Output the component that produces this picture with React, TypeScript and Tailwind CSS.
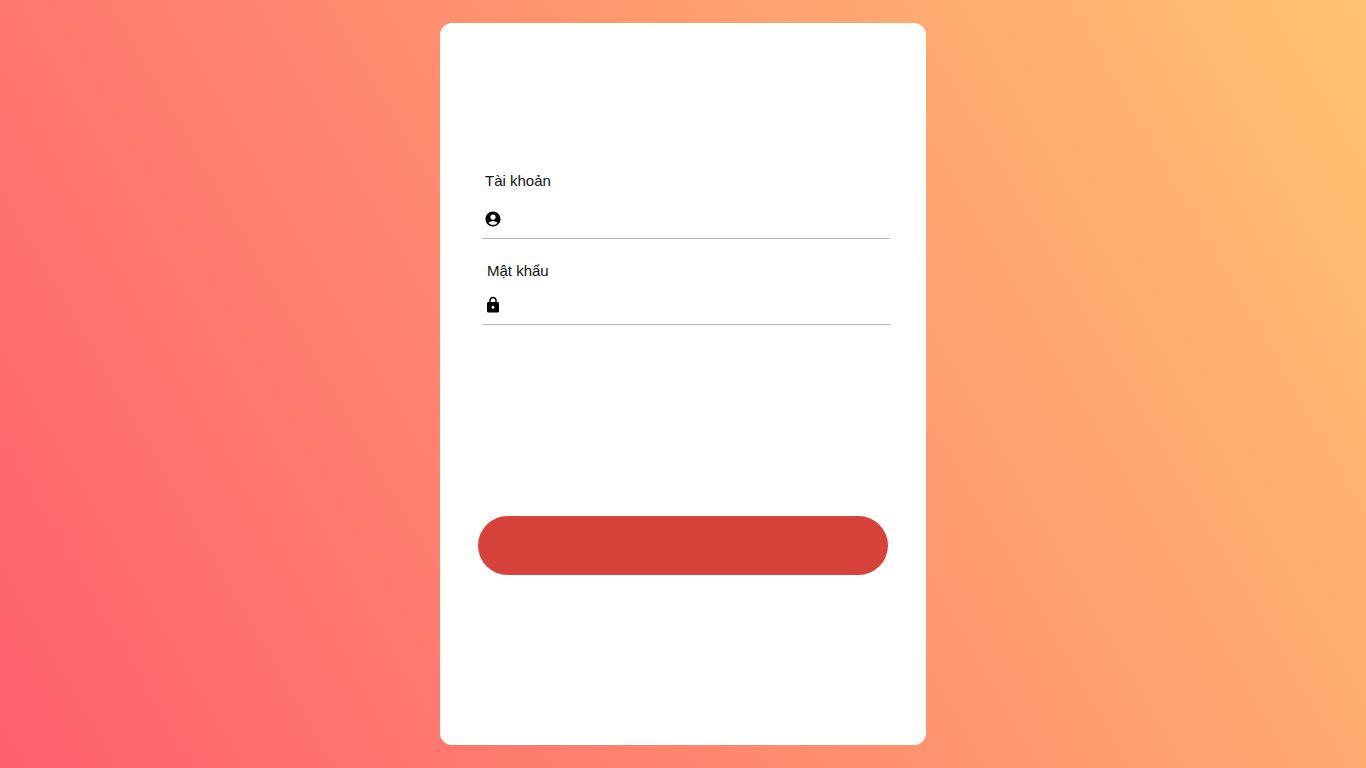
import { MdAccountCircle, MdLock } from "react-icons/md";

export default function App() {
  return (
    <main className="flex min-h-screen items-center justify-center bg-[linear-gradient(60deg,#ff5f6d,#ffc371)] p-5 font-['Liberation_Sans',Arial,sans-serif] text-[15px] leading-5 text-[#111111]">
      <form
        className="w-full max-w-[486px] rounded-xl bg-white px-[38px] pt-[148px] pb-[170px]"
        onSubmit={(event) => event.preventDefault()}
      >
        <div className="mr-[-2px] ml-1 flex flex-col">
          <div className="flex flex-col gap-2">
            <label htmlFor="account" className="pl-[3px]">
              Tài khoản
            </label>
            <div className="flex h-10 items-center gap-2 border-b border-[#b8b8b8] pt-px pl-0.5">
              <MdAccountCircle className="size-[18px] shrink-0 text-black" aria-hidden="true" />
              <input
                id="account"
                type="text"
                autoComplete="username"
                className="h-full min-w-0 flex-1 bg-transparent outline-none"
              />
            </div>
          </div>
          <div className="mt-[22px] flex flex-col gap-1">
            <label htmlFor="password" className="pl-[5px]">
              Mật khẩu
            </label>
            <div className="flex h-10 items-center gap-2 border-b border-[#b8b8b8] pt-px pl-0.5">
              <MdLock className="size-[18px] shrink-0 text-black" aria-hidden="true" />
              <input
                id="password"
                type="password"
                autoComplete="current-password"
                className="h-full min-w-0 flex-1 bg-transparent outline-none"
              />
            </div>
          </div>
        </div>
        <button
          type="submit"
          aria-label="Đăng nhập"
          className="mt-[191px] block h-[59px] w-full rounded-full bg-[#d7423a]"
        />
      </form>
    </main>
  );
}
